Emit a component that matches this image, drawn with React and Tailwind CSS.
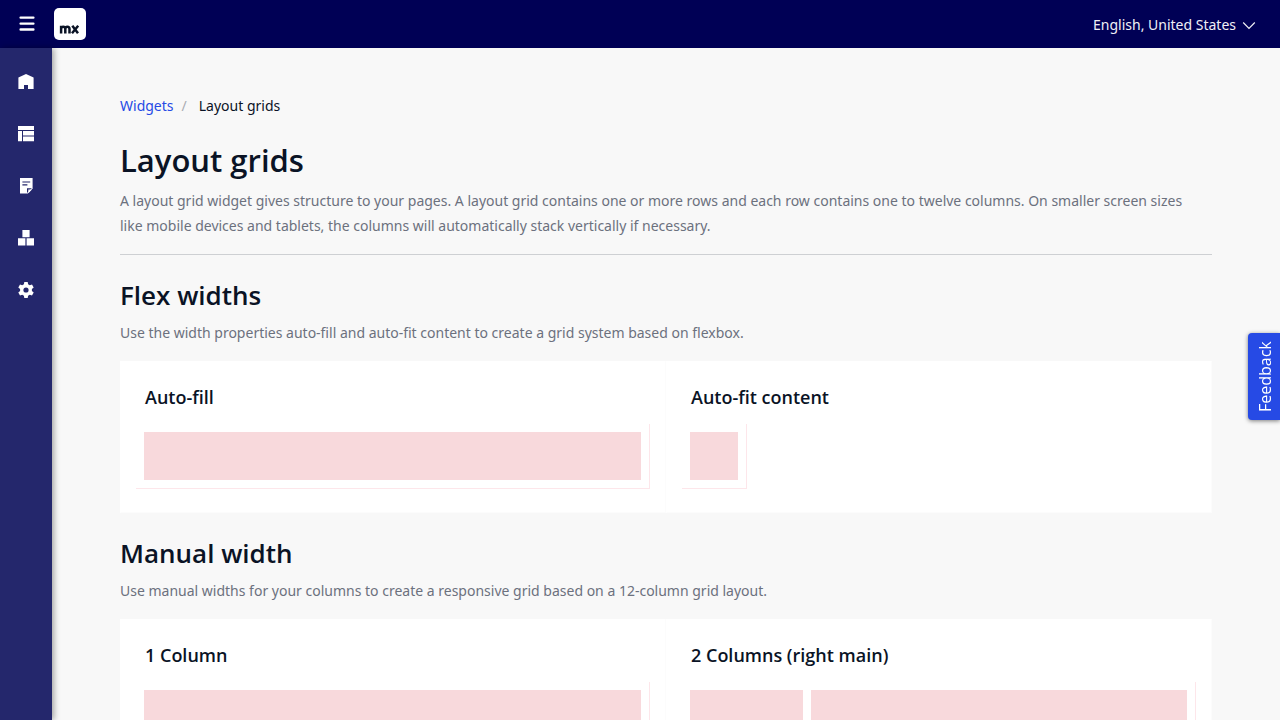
const navItems = [
  {
    label: 'Home',
    art: <path d="M8 0 15.600 3.500V15H10V11H6V15H0.400V3.500Z" />,
  },
  {
    label: 'Layouts',
    art: <path d="M0 0h16v4H0zM0 5h4v10.300H0zM5 5H16v4.500H5zM5 10.400H16v4.900H5z" />,
  },
  {
    label: 'Pages',
    art: (
      <>
        <path d="M2 0H14.600V10.500L9.800 15.500H2Z" />
        <path d="M9 10.200H13.800L9 15Z" fill="#24276c" />
        <path d="M10.300 11.500H14L10.300 15.200Z" />
        <path d="M4.400 4h7.800M4.400 6.900h5" stroke="#24276c" strokeWidth="1.100" />
      </>
    ),
  },
  {
    label: 'Building blocks',
    art: <path d="M4.400 0h7.200v7.200H4.400zM0 8.200h7.400v7.400H0zM8.600 8.200H16v7.400H8.600z" />,
  },
  {
    label: 'Settings',
    art: (
      <>
        <path d="M6.300 0h3.400l.4 2.300 1.700 1 2.200-.8 1.700 3-1.800 1.500v2l1.800 1.500-1.700 3-2.200-.8-1.700 1-.4 2.300H6.300l-.4-2.300-1.700-1-2.200.8-1.700-3L2.100 9V7L.3 5.500l1.700-3 2.200.8 1.700-1Z" />
        <circle cx="8" cy="8" r="2.600" fill="#24276c" />
      </>
    ),
  },
];

function Block({ className = '' }) {
  return <div className={`h-12 bg-[#f8d9dc] ${className}`} />;
}

function Frame({ className = '', children }) {
  return (
    <div className={`-mx-[9px] border-r border-b border-[#fde6ea] p-2 ${className}`}>{children}</div>
  );
}

function Card({ title, children }) {
  return (
    <section className="border border-l-white border-t-white border-[#fcfcfc] bg-white px-6 pt-[22px] pb-[23px]">
      <h3 className="mb-[13px] text-lg leading-[27px] font-semibold">{title}</h3>
      {children}
    </section>
  );
}

function Group({ title, text, children }) {
  return (
    <section className="mt-[23px]">
      <h2 className="text-[26px] leading-[34px] font-semibold">{title}</h2>
      <p className="mt-2 font-['Noto_Sans','Open_Sans',sans-serif] text-sm leading-[25px] text-[#6c717e]">{text}</p>
      <div className="mt-4 grid grid-cols-2">{children}</div>
    </section>
  );
}

export default function App() {
  return (
    <div className="flex h-screen flex-col overflow-hidden bg-[#f8f8f8] font-['Open_Sans',sans-serif] text-[#0a1325]">
      <header className="flex h-12 shrink-0 items-center bg-[#000055] text-white">
        <button type="button" aria-label="Toggle menu" className="flex w-[54px] justify-center">
          <svg width="16" height="16" viewBox="0 0 16 16" stroke="currentColor" strokeWidth="2.400" strokeLinecap="round">
            <path d="M1.600 1.600h12.800M1.600 7.600h12.800M1.600 13.500h12.800" />
          </svg>
        </button>
        <a href="#home" aria-label="Mendix" className="flex h-8 w-8 items-end justify-center rounded-[5px] bg-white">
          <svg width="32" height="32" viewBox="0 0 32 32" fill="none" stroke="#0a1325" strokeWidth="2.500">
            <path d="M7.100 25.500V17.700M7.100 25.500V21C7.100 18 11.300 18 11.300 21V25.500M11.300 21C11.300 18 15.500 18 15.500 21V25.500" />
            <path d="M18.300 17.800 24 25.300M24.200 17.800 18 25.300" />
          </svg>
        </a>
        <button
          type="button"
          className="mt-0.5 mr-6 ml-auto flex items-center gap-1.5 font-['Noto_Sans','Open_Sans',sans-serif] text-sm text-[#f0f0f6]"
        >
          English, United States
          <svg width="14" height="14" viewBox="0 0 14 14" fill="none" stroke="currentColor" strokeWidth="1.200">
            <path d="M1.200 4.500 7 10.300 12.800 4.500" />
          </svg>
        </button>
      </header>

      <div className="flex min-h-0 flex-1">
        <nav className="flex w-[52px] shrink-0 flex-col bg-[#24276c] pt-2 text-white shadow-[2px_0_6px_rgba(0,0,0,0.35)]">
          {navItems.map((item) => (
            <a key={item.label} href="#nav" aria-label={item.label} className="flex h-[52px] items-center justify-center">
              <svg width="16" height="16" viewBox="0 0 16 16" fill="currentColor">
                {item.art}
              </svg>
            </a>
          ))}
        </nav>

        <main className="min-w-0 flex-1 overflow-hidden px-[68px] pt-12">
          <nav aria-label="Breadcrumb" className="flex font-['Noto_Sans','Open_Sans',sans-serif] text-sm">
            <a href="#widgets" className="text-[#264ae5]">Widgets</a>
            <span className="mr-3 ml-2 text-[#a9acb3]">/</span>
            <span>Layout grids</span>
          </nav>
          <h1 className="mt-6 text-[31px] leading-10 font-semibold">Layout grids</h1>
          <p className="mt-2 border-b border-[#ced0d3] pr-4 pb-4 font-['Noto_Sans','Open_Sans',sans-serif] text-sm leading-[25px] text-[#6c717e]">
            A layout grid widget gives structure to your pages. A layout grid contains one or more rows and each row
            contains one to twelve columns. On smaller screen sizes like mobile devices and tablets, the columns will
            automatically stack vertically if necessary.
          </p>

          <Group
            title="Flex widths"
            text="Use the width properties auto-fill and auto-fit content to create a grid system based on flexbox."
          >
            <Card title="Auto-fill">
              <Frame><Block /></Frame>
            </Card>
            <Card title="Auto-fit content">
              <Frame className="w-fit"><Block className="w-12" /></Frame>
            </Card>
          </Group>

          <Group
            title="Manual width"
            text="Use manual widths for your columns to create a responsive grid based on a 12-column grid layout."
          >
            <Card title="1 Column">
              <Frame><Block /></Frame>
            </Card>
            <Card title="2 Columns (right main)">
              <Frame className="grid grid-cols-[3fr_10fr] gap-2">
                <Block />
                <Block />
              </Frame>
            </Card>
          </Group>
        </main>
      </div>

      <button
        type="button"
        className="fixed top-[333px] right-0 flex h-[87px] w-8 rotate-180 items-center justify-center rounded-r bg-[#264ae5] pr-0.5 text-base text-white shadow-[0_-1px_4px_rgba(0,0,0,0.5)] [writing-mode:vertical-rl]"
      >
        Feedback
      </button>
    </div>
  );
}
